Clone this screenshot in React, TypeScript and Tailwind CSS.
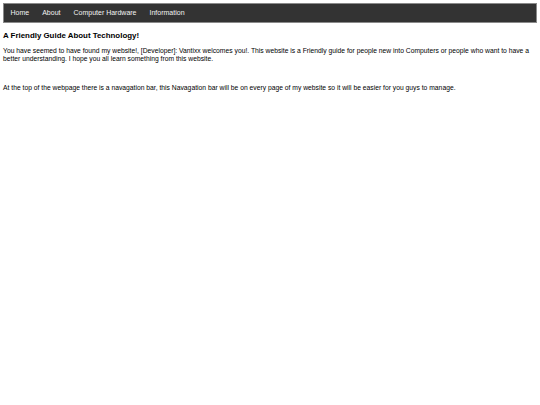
export default function App() {
  const links = ["Home", "About", "Computer Hardware", "Information"];
  return (
    <div className="min-h-[405px] bg-white p-[3px] font-['Liberation_Sans',Arial,sans-serif] text-black">
      <nav className="flex h-[20px] items-center border border-[#8a8a8a] bg-[#333333]">
        {links.map((l) => (
          <a key={l} className="px-[6.5px] text-[7px] leading-[18px] text-[#f2f2f2]">
            {l}
          </a>
        ))}
      </nav>
      <h1 className="mt-[8px] text-[7.9px] font-bold leading-[10px]">A Friendly Guide About Technology!</h1>
      <p className="mt-[6px] text-[6.75px] leading-[8px]">
        You have seemed to have found my website!, [Developer]: Vantixx welcomes you!. This website is a Friendly guide for people new into Computers or people who want to have a better understanding. I hope you all learn something from this website.
      </p>
      <p className="mt-[21px] text-[6.75px] leading-[8px]">
        At the top of the webpage there is a navagation bar, this Navagation bar will be on every page of my website so it will be easier for you guys to manage.
      </p>
    </div>
  );
}
